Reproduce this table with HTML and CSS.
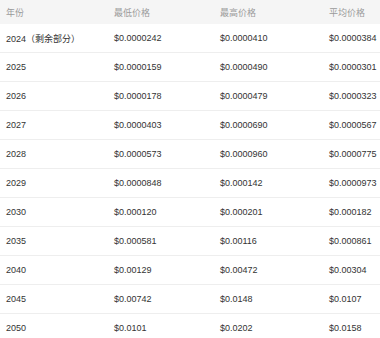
FILE: index.html
```html
<!DOCTYPE html>
<html lang="zh">
<head>
<meta charset="utf-8">
<link rel="stylesheet" href="styles.css">
</head>
<body>
<div class="table">
  <div class="row head"><span>年份</span><span>最低价格</span><span>最高价格</span><span>平均价格</span></div>
  <div class="row"><span>2024（剩余部分）</span><span>$0.0000242</span><span>$0.0000410</span><span>$0.0000384</span></div>
  <div class="row"><span>2025</span><span>$0.0000159</span><span>$0.0000490</span><span>$0.0000301</span></div>
  <div class="row"><span>2026</span><span>$0.0000178</span><span>$0.0000479</span><span>$0.0000323</span></div>
  <div class="row"><span>2027</span><span>$0.0000403</span><span>$0.0000690</span><span>$0.0000567</span></div>
  <div class="row"><span>2028</span><span>$0.0000573</span><span>$0.0000960</span><span>$0.0000775</span></div>
  <div class="row"><span>2029</span><span>$0.0000848</span><span>$0.000142</span><span>$0.0000973</span></div>
  <div class="row"><span>2030</span><span>$0.000120</span><span>$0.000201</span><span>$0.000182</span></div>
  <div class="row"><span>2035</span><span>$0.000581</span><span>$0.00116</span><span>$0.000861</span></div>
  <div class="row"><span>2040</span><span>$0.00129</span><span>$0.00472</span><span>$0.00304</span></div>
  <div class="row"><span>2045</span><span>$0.00742</span><span>$0.0148</span><span>$0.0107</span></div>
  <div class="row"><span>2050</span><span>$0.0101</span><span>$0.0202</span><span>$0.0158</span></div>
</div>
</body>
</html>
```
FILE: styles.css
```css
html, body {
  margin: 0;
  padding: 0;
  background: #fff;
}
body {
  font-family: "Liberation Sans", "Noto Sans CJK SC", sans-serif;
  font-size: 9px;
  color: #333;
}
.table {
  display: flex;
  flex-direction: column;
}
.row {
  display: grid;
  grid-template-columns: 108px 106px 109px 1fr;
  align-items: center;
  height: 28px;
  border-bottom: 1px solid #eeeeee;
  padding-left: 6px;
}
.row.head {
  height: 24px;
  background: #f5f5f5;
  color: #9a9a9a;
  border-bottom: none;
}
.row:last-child {
  border-bottom: none;
}
```
